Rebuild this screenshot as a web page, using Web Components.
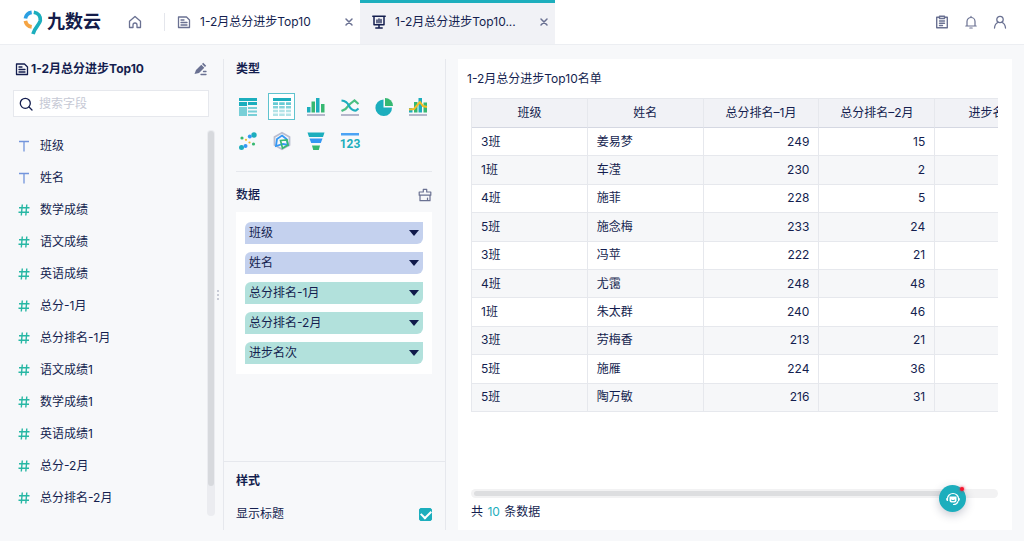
<!DOCTYPE html>
<html lang="zh-CN">
<head>
<meta charset="utf-8">
<title>九数云 - 1-2月总分进步Top10</title>
<style>
:root{--ink:#141e4f;--muted:#6a7192;--teal:#1caebd;--line:#e6e8ed;--page:#f7f8fa}
body{margin:0;background:var(--page);color:var(--ink);font:12px/20px Inter,"Noto Sans CJK SC",sans-serif}
</style>
</head>
<body>
<analysis-app></analysis-app>
<script>
const line = (d, w = 1.2) => `<path d="${d}" fill="none" stroke="currentColor" stroke-width="${w}" stroke-linejoin="round" stroke-linecap="round"/>`;
const ICONS = {
  home: ['0 0 14 14', line('M1.500 6.300 7 1.500l5.500 4.800v6.200H9V10a2 2 0 0 0-4 0v2.500H1.500z', 1.300)],
  doc: ['0 0 14 14', line('M1.500 2h8l3 3v7.500h-11zM4 5h3M4 7.500h6M4 10h6', 1.300)],
  board: ['0 0 14 14', line('M.8 1.200h12.400M2 1.500v8.300h10V1.500M7 10v3M3.800 13h6.400', 1.500) + line('M5 7.800V5M7 7.800V3.800M9 7.800V4.500', 1.300)],
  close: ['0 0 10 10', line('M2 2l6 6M8 2 2 8', 1.500)],
  clip: ['0 0 14 14', line('M4.500 2.300H1.700v10.500h10.600V2.300H9.500M4.500 1.200h5v2.300h-5zM4.500 6h5M4.500 8.200h5M4.500 10.500h3', 1.400)],
  bell: ['0 0 14 14', line('M1.800 11h10.400M3 11V6.500a4 4 0 0 1 8 0V11M5.800 13h2.400M7 1.400v1')],
  user: ['0 0 14 14', '<circle cx="7" cy="4.500" r="3.200" fill="none" stroke="currentColor" stroke-width="1.300"/>' + line('M1.500 13c.2-3 1.500-4.800 3.500-5.500M12.500 13c-.2-3-1.500-4.800-3.500-5.500', 1.300)],
  edit: ['0 0 14 14', '<path d="M1.500 12 3 8 8.300 2.700l3 3L6 11z M9 2l1.200-1.200 3 3L12 5z" fill="currentColor"/>' + line('M10.500 9.500H13M8 12.500h5', 1.300)],
  search: ['0 0 14 14', '<circle cx="6.300" cy="6.300" r="5" fill="none" stroke="currentColor" stroke-width="1.300"/>' + line('M10 10l3 3', 1.300)],
  text: ['0 0 12 12', '<path d="M1 1.500h10M6 1.500V11.500" fill="none" stroke="#7395dc" stroke-width="1.300"/>'],
  num: ['0 0 12 12', '<path d="M4.300.500 3.300 11.500M8.800.500 7.800 11.500M1 3.800h10.500M.5 8.200H11" fill="none" stroke="#27b7a4" stroke-width="1.400"/>'],
  clean: ['0 0 14 14', line('M5.300 4V1.300h3.400V4h4.100v3.200H1.200V4zM2 7.200v5.500h10V7.200M9.500 10v2.500')],
  group: ['0 0 18 18', '<path fill="#1caebd" d="M0 0h18v3H0zM0 4h8v4H0zM9 4h9v3H9z"/><path fill="#78cfd7" d="M0 9h8v9H0zM9 9h9v2H9zM9 12.500h9v2H9zM9 16h9v2H9z"/>'],
  table: ['0 0 18 18', '<path fill="#1caebd" d="M0 0h18v3H0z"/><path fill="#68cbd4" d="M0 4.300h5V7H0zM6.200 4.300h5.500V7H6.200zM13 4.300h5V7h-5z"/><path fill="#84d3da" d="M0 8h5v2.500H0zM6.200 8h5.500v2.500H6.200zM13 8h5v2.500h-5z"/><path fill="#b3e3e7" d="M0 11.700h5v2.500H0zM6.200 11.700h5.500v2.500H6.200zM13 11.700h5v2.500h-5zM0 15.500h5V18H0zM6.200 15.500h5.500V18H6.200zM13 15.500h5V18h-5z"/>'],
  bar: ['0 0 18 18', '<path fill="#b4b7cb" d="M0 16h18v2H0z"/><path fill="#1caebd" d="M0 9h3.500v5.500H0zM9 0h3.500v14.500H9z"/><path fill="#36b871" d="M4.500 3.500H8v11H4.500zM14 6h3.500v8.500H14z"/>'],
  trend: ['0 0 18 18', '<path fill="#b4b7cb" d="M0 16h18v2H0z"/><path fill="none" stroke="#4abf82" stroke-width="2.200" d="M.5 13 4.500 11 9 6l4.500-3.500L17.500 6"/><path fill="none" stroke="#1caebd" stroke-width="2.200" d="M.5 2.500Q6 3 8 8q3 5 7 4.500l2.500-2"/>'],
  pie: ['0 0 18 18', '<path fill="#1caebd" d="M8.500 1.500v8H17A8.300 8.300 0 1 1 8.500 1.500z"/><path fill="#36b871" d="M10 0a8 8 0 0 1 8 8h-8z"/>'],
  combo: ['0 0 18 18', '<path fill="#b4b7cb" d="M0 16h18v2H0z"/><path fill="#1caebd" d="M0 10h3.500v4.500H0zM9.500 0H13v14.500H9.500z"/><path fill="#36b871" d="M5 4h3.500v10.500H5zM14.500 4.500H18v10h-3.500z"/><path fill="none" stroke="#f6bd26" stroke-width="2" d="M0 11.500 5 11l6-7 3 4 4 1"/>'],
  scatter: ['0 0 18 18', '<g fill="#1caebd"><circle cx="15" cy="3" r="2.700"/><circle cx="2.500" cy="15.500" r="2.500"/></g><g fill="#3498f4"><circle cx="10.800" cy="4.500" r="2"/><circle cx="6.500" cy="14" r="2"/></g><g fill="#36b871"><circle cx="3" cy="6" r="1.600"/><circle cx="14.500" cy="12" r="1.600"/></g><g fill="#f6bd26"><circle cx="7" cy="7.800" r="1.100"/><circle cx="10.500" cy="10.500" r="1.100"/></g>'],
  radar: ['0 0 18 18', '<g fill="none"><path stroke="#babdcf" stroke-width="1.800" d="M9 .8 16.500 5v8L9 17.200 1.500 13V5z"/><path stroke="#3498f4" stroke-width="1.800" d="M9 3.500 13.500 7l1.500 6-5-1-7 2 1-7z"/><path stroke="#36b871" stroke-width="1.700" d="M7.500 8.500 14 8l1 5-5.500 3.200z"/></g>'],
  funnel: ['0 0 18 18', '<path fill="#1caebd" d="M.5.500h17L16 5H2z"/><path fill="#3498f4" d="M2.500 6.500h13L13.800 11H4.200z"/><path fill="#36b871" d="M5 13.500h8L11.800 18H6.200z"/>'],
  kpi: ['0 0 18 18', '<path fill="#4ba3f5" d="M0 1h18v2.500H0z"/><text x="9" y="16" text-anchor="middle" font-family="Roboto,sans-serif" font-weight="700" font-size="12" fill="#1caebd">123</text>'],
  headset: ['0 0 14 14', '<path fill="currentColor" d="M3.500 4.500h7v4a2 2 0 0 1-2 2h-3a2 2 0 0 1-2-2z"/>' + line('M1.500 8.500v-2a5.500 5 0 0 1 11 0v2M12 9.500q-1 3-4.500 3M.8 6.500v1.500M13.200 6.500v1.500', 1.200) + '<path stroke="#1caebd" fill="none" d="M5 8q2 1.500 4 0"/>'],
  logo: ['0 0 20 25', '<g fill="none" stroke-width="3.700"><path stroke="#2b9fe2" d="M2.400 8.500A7.500 7.500 0 0 1 8.700 2.300"/><path stroke="#f5a443" d="M2.400 10.800A7.500 7.500 0 0 0 8.700 16.900"/><path stroke="#1caebd" d="M10.800 2.200C15.500 3 17.700 6.500 17.300 10.500 16.800 14.500 11.500 17.500 10 24"/></g>'],
};

/* Registers an element whose open shadow root is filled from markup. */
function element(name, render) {
  customElements.define(name, class extends HTMLElement {
    connectedCallback() {
      if (this.shadowRoot) return;
      const t = document.createElement('template');
      t.innerHTML = render(this);
      this.attachShadow({mode: 'open'}).append(t.content.cloneNode(true));
    }
  });
}
const BASE = ':host,*{box-sizing:border-box}button,input{font:inherit;color:inherit}button{border:0;padding:0;margin:0;background:none;cursor:pointer}h1,h2,p{margin:0;padding:0}h1,h2{font-size:inherit}';

element('ui-icon', el => {
  const [box, body] = ICONS[el.getAttribute('name')];
  return `<style>:host{display:block;flex:none;width:14px;height:14px}svg{display:block;width:100%;height:100%;overflow:visible}</style><svg viewBox="${box}" aria-hidden="true">${body}</svg>`;
});

element('page-tab', el => `<style>${BASE}
:host{display:flex;align-items:center;width:195px;height:100%;padding:0 6px 0 12px;color:var(--muted)}
:host([active]){background:#f1f2f6;border-top:3px solid var(--teal);padding-bottom:3px}
:host([active]) ui-icon.lead{color:var(--ink)}
a{flex:1;margin-left:9px;color:var(--ink);text-decoration:none;white-space:nowrap}
.x{width:10px;height:10px}</style>
<ui-icon class="lead" name="${el.getAttribute('icon')}"></ui-icon><a href="#"><slot></slot></a>
<button aria-label="关闭"><ui-icon class="x" name="close"></ui-icon></button>`);

element('app-header', () => `<style>${BASE}
:host{display:flex;align-items:center;height:45px;background:#fff;border-bottom:1px solid #eceef2;color:var(--muted)}
.brand{display:flex;align-items:center;gap:4px;margin-left:23px;color:#141c4a;text-decoration:none;font-size:18px;font-weight:700}
.brand ui-icon{width:20px;height:25px}
.home{margin-left:27px}
.sep{width:1px;height:18px;background:#e4e6ec;margin-left:22px}
nav{display:flex;height:100%}
.tools{display:flex;gap:15px;margin-left:auto;padding-right:17px}
</style>
<a class="brand" href="#"><ui-icon name="logo"></ui-icon><span>九数云</span></a>
<button class="home" aria-label="首页"><ui-icon name="home"></ui-icon></button><span class="sep"></span>
<nav><page-tab icon="doc">1-2月总分进步Top10</page-tab><page-tab icon="board" active>1-2月总分进步Top10...</page-tab></nav>
<div class="tools"><button aria-label="任务"><ui-icon name="clip"></ui-icon></button><button aria-label="通知"><ui-icon name="bell"></ui-icon></button><button aria-label="账户"><ui-icon name="user"></ui-icon></button></div>`);

element('field-item', el => `<style>
:host{display:flex;align-items:center;gap:10px;height:32px;padding-left:18px}
ui-icon{width:12px;height:12px}</style><ui-icon name="${el.getAttribute('type')}"></ui-icon><slot></slot>`);

const FIELDS = ['班级', '姓名', '数学成绩', '语文成绩', '英语成绩', '总分-1月', '总分排名-1月', '语文成绩1', '数学成绩1', '英语成绩1', '总分-2月', '总分排名-2月'];
element('field-panel', () => `<style>${BASE}
:host{display:flex;flex-direction:column;width:224px;border-right:1px solid var(--line)}
header{display:flex;align-items:center;gap:2px;height:20px;padding:0 16px 0 15px}
h1{flex:1;white-space:nowrap}
header button{color:var(--muted)}
label{display:flex;align-items:center;gap:6px;height:27px;margin:11px 14px 13px 13px;padding:0 5px;background:#fff;border:1px solid var(--line)}
input{flex:1;min-width:0;border:0;outline:0;padding:0;background:none}
input::placeholder{color:#c6c9d5;opacity:1}
.body{display:flex;flex:1;min-height:0}
.list{flex:1;overflow:hidden;height:386px}
.bar{width:8px;height:386px;border-radius:4px;background:#ebecf0;padding:1px 1px 30px}
.bar i{display:block;height:100%;border-radius:3px;background:#d7d9dd}
.grip{display:grid;gap:2px;width:8px;padding-left:2px;align-content:center;height:330px}
.grip i{width:2px;height:2px;background:#b9bdca;border-radius:1px}
</style>
<header><ui-icon name="doc"></ui-icon><h1>1-2月总分进步Top10</h1><button aria-label="重命名"><ui-icon name="edit"></ui-icon></button></header>
<label><ui-icon name="search"></ui-icon><input type="search" placeholder="搜索字段" aria-label="搜索字段"></label>
<div class="body"><div class="list">${FIELDS.map((f, i) => `<field-item type="${i < 2 ? 'text' : 'num'}">${f}</field-item>`).join('')}</div>
<div class="bar"><i></i></div><div class="grip"><i></i><i></i><i></i></div></div>`);

element('field-pill', el => `<style>${BASE}
:host{display:block}
button{display:flex;align-items:center;justify-content:space-between;width:100%;height:22px;padding:0 4px;background:#b2e1dc;border-radius:6px 0}
:host([dim]) button{background:#c4d1ee}
i{border:5px solid transparent;border-top:6px solid #101a4b;border-bottom:0}</style><button aria-haspopup="menu"><slot></slot><i></i></button>`);

const CHARTS = [['group', '分组表'], ['table', '明细表'], ['bar', '柱形图'], ['trend', '折线图'], ['pie', '饼图'], ['combo', '组合图'], ['scatter', '散点图'], ['radar', '雷达图'], ['funnel', '漏斗图'], ['kpi', '指标卡']];
element('config-panel', () => `<style>${BASE}
:host{display:flex;flex-direction:column;width:222px;border-right:1px solid var(--line)}
.top{flex:1;padding:0 13px 0 12px}
h2,header,.opt{height:20px}
.types{display:grid;grid-template-columns:repeat(auto-fill,27px);gap:7px;margin:14px -3px 17px -2px}
.types button{display:grid;place-items:center;height:27px;border:1px solid transparent}
.types button[aria-pressed=true]{border-color:#5fc3ce;background:#fff}
.types ui-icon{width:18px;height:18px}
header{display:flex;align-items:center;justify-content:space-between;margin-top:13px}
header h2{font-weight:500}header button{color:var(--muted)}
hr{height:1px;border:0;background:var(--line);margin:0}
.pills{display:grid;gap:8px;margin-top:7px;padding:10px 9px;background:#fff}
.style{border-top:1px solid var(--line);padding:9px 13px 6px 12px}
.opt{display:flex;align-items:center;justify-content:space-between;margin-top:13px}
input{appearance:none;display:grid;place-items:center;width:13px;height:13px;margin:0;border-radius:2px;border:1px solid #b9bdca}
input:checked{background:var(--teal);border-color:var(--teal)}
input:checked::after{content:"";width:8px;height:5px;border:solid #fff;border-width:0 0 2px 2px;rotate:-45deg;translate:0 -1px}
</style>
<div class="top"><h2>类型</h2><div class="types">${CHARTS.map(([k, n]) => `<button aria-label="${n}" aria-pressed="${k === 'table'}"><ui-icon name="${k}"></ui-icon></button>`).join('')}</div>
<hr><header><h2>数据</h2><button aria-label="清空"><ui-icon name="clean"></ui-icon></button></header>
<div class="pills"><field-pill dim>班级</field-pill><field-pill dim>姓名</field-pill><field-pill>总分排名-1月</field-pill><field-pill>总分排名-2月</field-pill><field-pill>进步名次</field-pill></div></div>
<section class="style"><h2>样式</h2><div class="opt"><label for="show">显示标题</label><input id="show" type="checkbox" checked></div></section>`);

const ROWS = [['3班', '姜易梦', 249, 15], ['1班', '车滢', 230, 2], ['4班', '施菲', 228, 5], ['5班', '施念梅', 233, 24], ['3班', '冯苹', 222, 21], ['4班', '尤霭', 248, 48], ['1班', '朱太群', 240, 46], ['3班', '劳梅香', 213, 21], ['5班', '施雁', 224, 36], ['5班', '陶万敏', 216, 31]];
element('result-table', () => `<style>
:host{display:block;overflow:hidden}
table{table-layout:fixed;width:580px;height:314px;border-collapse:separate;border-spacing:0;border-left:1px solid var(--line);border-top:1px solid var(--line)}
th,td{box-sizing:border-box;padding:0 9px;border-right:1px solid var(--line);border-bottom:1px solid var(--line);white-space:nowrap}
th{height:29px;font-weight:400;background:#f1f2f6;border-bottom-color:#d5d8e2}
tbody tr:nth-child(even){background:#f6f7f9}
.n{text-align:right}</style>
<table><thead><tr><th>班级</th><th>姓名</th><th>总分排名–1月</th><th>总分排名–2月</th><th>进步名次</th></tr></thead>
<tbody>${ROWS.map(r => `<tr><td>${r[0]}</td><td>${r[1]}</td><td class="n">${r[2]}</td><td class="n">${r[3]}</td><td></td></tr>`).join('')}</tbody></table>`);

element('support-button', () => `<style>${BASE}
:host{display:block}
button{display:grid;place-items:center;position:relative;width:27px;height:27px;border-radius:50%;background:var(--teal);color:#fff;box-shadow:0 3px 10px #1e284d40}
i{position:absolute;top:2px;right:2px;width:4px;height:4px;border-radius:50%;background:#f5142d;box-shadow:0 0 3px #f5142d}</style><button aria-label="在线客服"><ui-icon name="headset"></ui-icon><i></i></button>`);

element('result-panel', () => `<style>${BASE}
:host{display:flex;flex-direction:column;position:relative;flex:1;min-width:0;margin-left:12px;padding:10px 14px 8px 13px;background:#fff}
h1{font-weight:400;margin:0 0 9px -4px}
.bar{margin-top:auto;height:9px;border-radius:5px;background:#f2f2f3;padding:2px 33px 2px 3px}
.bar i{display:block;height:5px;border-radius:3px;background:#dddee0}
p{margin-top:4px}b{font-weight:400;color:var(--teal);margin:0 1px}
support-button{position:absolute;right:46px;bottom:18px}</style>
<h1>1-2月总分进步Top10名单</h1><result-table></result-table>
<div class="bar"><i></i></div><p>共 <b>10</b> 条数据</p><support-button></support-button>`);

element('analysis-app', () => `<style>
:host{display:flex;flex-direction:column;min-height:100vh}
main{display:flex;flex:1;padding:14px 12px 11px 0}</style>
<app-header></app-header><main><field-panel></field-panel><config-panel></config-panel><result-panel></result-panel></main>`);
</script>
</body>
</html>
